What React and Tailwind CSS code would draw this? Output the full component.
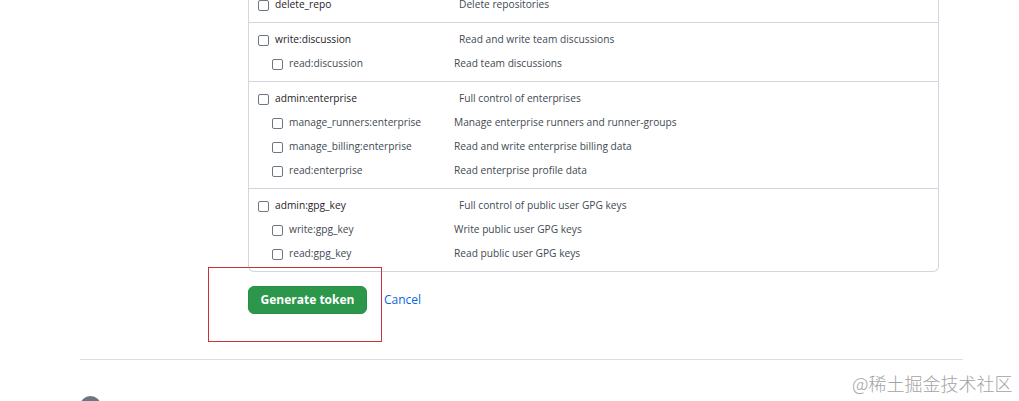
import React from "react";

const groups = [
  { top: ["delete_repo", "Delete repositories"], subs: [] },
  {
    top: ["write:discussion", "Read and write team discussions"],
    subs: [["read:discussion", "Read team discussions"]],
  },
  {
    top: ["admin:enterprise", "Full control of enterprises"],
    subs: [
      ["manage_runners:enterprise", "Manage enterprise runners and runner-groups"],
      ["manage_billing:enterprise", "Read and write enterprise billing data"],
      ["read:enterprise", "Read enterprise profile data"],
    ],
  },
  {
    top: ["admin:gpg_key", "Full control of public user GPG keys"],
    subs: [
      ["write:gpg_key", "Write public user GPG keys"],
      ["read:gpg_key", "Read public user GPG keys"],
    ],
  },
];

function Box() {
  return <span className="block w-[11px] h-[11px] rounded-[2px] border border-[#6e7781] bg-white shrink-0" />;
}

export default function App() {
  return (
    <div className="relative w-[1019px] h-[401px] overflow-hidden bg-white" style={{ fontFamily: '"Open Sans", "Noto Sans", sans-serif' }}>
      <div className="ml-[248px] w-[691px] -mt-[12px] border border-t-0 border-[#d0d7de] rounded-b-[6px]">
        {groups.map((g, i) => (
          <div key={i} className={`py-[5px] ${i > 0 ? "border-t border-[#d0d7de]" : ""}`}>
            <div className="h-[24px] flex items-center pl-[9px] text-[10.2px] text-[#1f2328]">
              <Box />
              <span className="ml-[6px] w-[184px] font-medium">{g.top[0]}</span>
              <span className="text-[#424a53]">{g.top[1]}</span>
            </div>
            {g.subs.map((s) => (
              <div key={s[0]} className="h-[24px] flex items-center pl-[23px] text-[10.2px] text-[#1f2328]">
                <Box />
                <span className="ml-[6px] w-[165px] text-[#424a53]">{s[0]}</span>
                <span className="text-[#424a53]">{s[1]}</span>
              </div>
            ))}
          </div>
        ))}
      </div>
      <div className="ml-[248px] mt-[14px] flex items-center">
        <button className="h-[28px] w-[119px] rounded-[6px] bg-[#2c974b] text-white text-[12px] font-bold border border-[#298e46]">
          Generate token
        </button>
        <a className="ml-[17px] text-[12px] text-[#0969da]">Cancel</a>
      </div>
      <div className="ml-[80px] mt-[45px] w-[883px] border-t border-[#d8dee4]" />
      <div className="ml-[80px] mt-[36px] w-[21px] h-[21px] rounded-full bg-[#6e7781]" />
      <div className="absolute left-[208px] top-[267px] w-[174px] h-[75px] border border-[#c8323b]" />
      <div
        className="absolute left-[852px] top-[371px] text-[18px] leading-[24px] text-[#a3a3a3] font-light"
        style={{ fontFamily: '"Noto Sans CJK SC", sans-serif' }}
      >
        @稀土掘金技术社区
      </div>
    </div>
  );
}
